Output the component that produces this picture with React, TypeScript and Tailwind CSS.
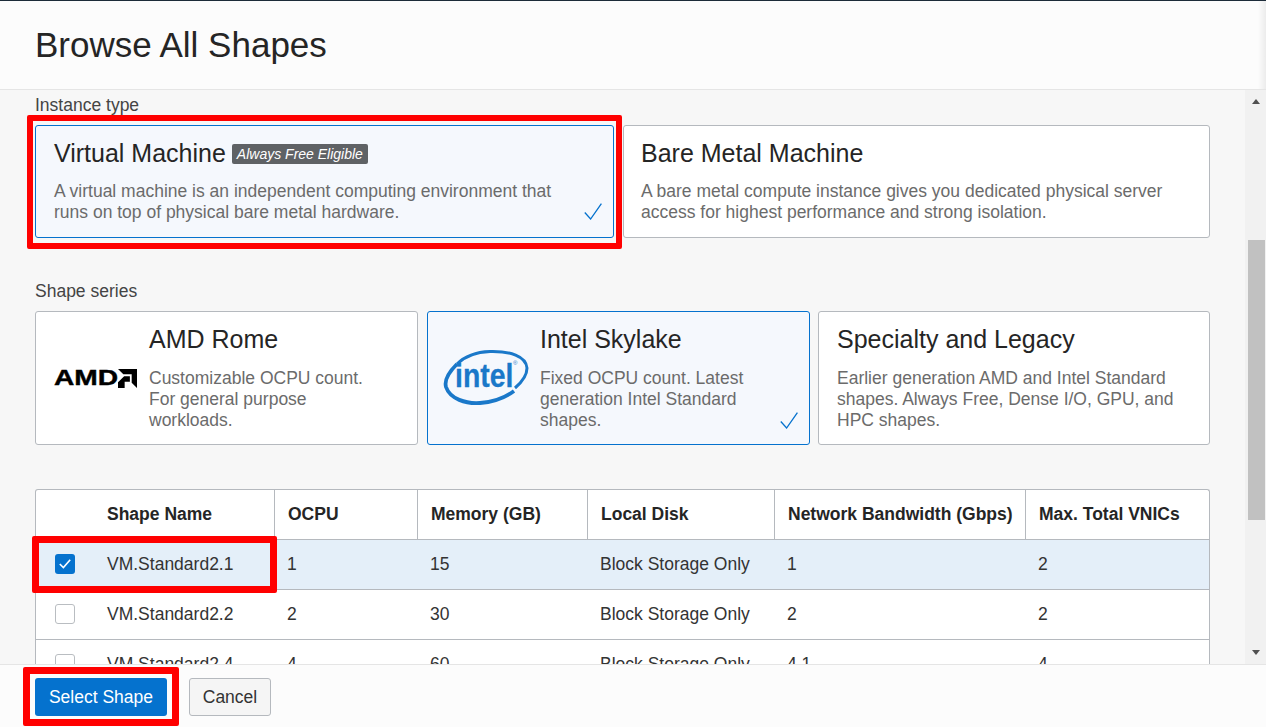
const font = "font-['Liberation_Sans',Arial,sans-serif]";

const Check = ({ className }: { className: string }) => (
  <svg viewBox="0 0 18 17" className={className} fill="none" stroke="#0572ce" strokeWidth="1.3">
    <path d="M0.8 9.5 L6.6 16 L17.4 0.6" />
  </svg>
);

const AmdLogo = () => (
  <div className="flex h-[19px] w-[83px] shrink-0 items-center">
    <span className="origin-left [transform:scaleX(1.28)] text-[22px] leading-none font-bold text-black [-webkit-text-stroke:0.4px_black]">
      AMD
    </span>
    <svg viewBox="0 0 20 20" className="ml-auto h-[19px] w-[19px]" fill="#000">
      <path d="M0 0 H20 V20 L14.4 14.4 V5.6 H5.6 Z" />
      <path d="M6.5 7.5 H12.5 V13.5 H7 V20 H0 V14 Z" />
    </svg>
  </div>
);

const IntelLogo = () => (
  <div className="relative mt-[33px] h-[64px] w-[92px] shrink-0 self-start">
    <svg viewBox="0 0 92 64" className="absolute inset-0 h-full w-full" fill="none" stroke="#1a78c9">
      <path d="M17 19 C9 27 4 35 6 42 C10 54 26 59 40 58 C54 57 66 52 74 46" strokeWidth="3.8" />
      <path d="M17 19 C25 11 36 7 50 6.5 C70 6 86 11 87 23 C87 30 82 37 75 43" strokeWidth="3" />
    </svg>
    <span className="absolute top-[13px] left-[15px] origin-left [transform:scaleX(0.86)] text-[33px] leading-[36px] font-bold text-[#1a78c9] [-webkit-text-stroke:0.3px_#1a78c9]">
      intel
    </span>
    <span className="absolute top-[15px] left-[73px] text-[6px] leading-[7px] text-[#1a78c9]">®</span>
  </div>
);

const TypeCard = ({
  title,
  badge,
  lines,
  selected,
  className,
}: {
  title: string;
  badge?: string;
  lines: string[];
  selected?: boolean;
  className: string;
}) => (
  <div
    className={`relative h-[113px] rounded-[3px] border pt-[11px] ${className} ${
      selected ? "border-[#0572ce] bg-[#f5f8fd]" : "border-[#b5b9be] bg-white"
    }`}
  >
    <div className="flex h-[33px] items-center gap-[6px]">
      <span className="text-[25px] leading-[33px] text-[#252525]">{title}</span>
      {badge && (
        <span className="rounded-[2px] bg-[#5f6265] px-[5px] text-[14px] leading-[20px] text-white italic">
          {badge}
        </span>
      )}
    </div>
    <div className="mt-[11px] text-[17.5px] leading-[21px] text-[#6b6b6b]">
      {lines.map((l) => (
        <div key={l}>{l}</div>
      ))}
    </div>
    {selected && <Check className="absolute top-[77px] right-[11px] h-[17px] w-[18px]" />}
  </div>
);

const SeriesCard = ({
  title,
  lines,
  logo,
  selected,
  className,
  pad,
}: {
  title: string;
  lines: string[];
  logo?: React.ReactNode;
  selected?: boolean;
  className: string;
  pad: string;
}) => (
  <div
    className={`relative flex h-[134px] items-center rounded-[3px] border ${pad} ${className} ${
      selected ? "border-[#0572ce] bg-[#f5f8fd]" : "border-[#b5b9be] bg-white"
    }`}
  >
    {logo}
    <div className="self-start pt-[11px]">
      <div className="text-[25px] leading-[33px] text-[#252525]">{title}</div>
      <div className="mt-[12px] text-[17.5px] leading-[21px] text-[#6b6b6b]">
        {lines.map((l) => (
          <div key={l}>{l}</div>
        ))}
      </div>
    </div>
    {selected && <Check className="absolute right-[11px] bottom-[15px] h-[17px] w-[18px]" />}
  </div>
);

const columns = [
  "w-[239px]",
  "w-[143px]",
  "w-[170px]",
  "w-[187px]",
  "w-[251px]",
  "w-[183px]",
];

const headers = ["Shape Name", "OCPU", "Memory (GB)", "Local Disk", "Network Bandwidth (Gbps)", "Max. Total VNICs"];

const rows = [
  ["VM.Standard2.1", "1", "15", "Block Storage Only", "1", "2"],
  ["VM.Standard2.2", "2", "30", "Block Storage Only", "2", "2"],
  ["VM.Standard2.4", "4", "60", "Block Storage Only", "4.1", "4"],
];

const ShapeTable = () => (
  <div className="mt-[44px] w-[1175px] rounded-t-[3px] border-x border-t border-[#b5b9be] bg-white">
    <div className="flex h-[50px] border-b border-[#b5b9be] text-[17.5px] font-bold text-[#252525]">
      {headers.map((h, i) => (
        <div
          key={h}
          className={`flex items-center ${columns[i]} ${i === 0 ? "pl-[71px]" : "pl-[13px]"} ${
            i < 5 ? "border-r border-[#b5b9be]" : ""
          }`}
        >
          {h}
        </div>
      ))}
    </div>
    {rows.map((row, r) => (
      <div
        key={row[0]}
        className={`flex h-[50px] border-b border-[#b5b9be] text-[17.5px] text-[#333] ${r === 0 ? "bg-[#e4eff9]" : ""}`}
      >
        {row.map((c, i) => (
          <div
            key={i}
            className={`relative flex items-center ${columns[i]} ${i === 0 ? "pl-[71px]" : "pl-[12px]"} ${
              i < 5 ? "pr-px" : ""
            }`}
          >
            {i === 0 &&
              (r === 0 ? (
                <span className="absolute top-[14px] left-[19px] flex h-[20px] w-[20px] items-center justify-center rounded-[3px] bg-[#0572ce]">
                  <svg viewBox="0 0 12 10" className="h-[10px] w-[12px]" fill="none" stroke="#fff" strokeWidth="1.6">
                    <path d="M0.8 5 L4.4 8.6 L11.2 0.8" />
                  </svg>
                </span>
              ) : (
                <span className="absolute top-[14px] left-[19px] h-[20px] w-[20px] rounded-[3px] border border-[#b9bdc1] bg-white" />
              ))}
            {c}
          </div>
        ))}
      </div>
    ))}
  </div>
);

const Scrollbar = () => (
  <div className="flex w-[21px] shrink-0 flex-col items-center bg-[#f1f1f1]">
    <div className="mt-[9px] h-0 w-0 border-x-[4.5px] border-b-[5px] border-x-transparent border-b-[#505050]" />
    <div className="mt-[136px] ml-px h-[280px] w-[17px] bg-[#c1c1c1]" />
    <div className="mt-[130px] h-0 w-0 border-x-[4.5px] border-t-[5px] border-x-transparent border-t-[#505050]" />
  </div>
);

const App = () => {
  return (
    <div className={`relative flex h-[727px] w-[1266px] flex-col overflow-hidden bg-[#fcfcfc] ${font}`}>
      <div className="h-px shrink-0 bg-[#1c2b39]" />
      <div className="relative flex h-[89px] shrink-0 items-center border-b border-[#e5e5e5] pl-[35px]">
        <h1 className="text-[35px] leading-[44px] font-normal text-[#252525]">Browse All Shapes</h1>
        <div className="absolute top-0 right-0 h-full w-[8px] bg-gradient-to-r from-transparent to-[#ececec]" />
      </div>
      <div className="flex min-h-0 flex-1 bg-[#f7f7f7]">
        <div className="min-w-0 flex-1 overflow-hidden pl-[35px]">
          <div className="pt-[5px] text-[17.5px] leading-[20px] text-[#444]">Instance type</div>
          <div className="mt-[10px] flex gap-[9px]">
            <TypeCard
              selected
              className="w-[579px] pl-[18px]"
              title="Virtual Machine"
              badge="Always Free Eligible"
              lines={[
                "A virtual machine is an independent computing environment that",
                "runs on top of physical bare metal hardware.",
              ]}
            />
            <TypeCard
              className="w-[587px] pl-[17px]"
              title="Bare Metal Machine"
              lines={[
                "A bare metal compute instance gives you dedicated physical server",
                "access for highest performance and strong isolation.",
              ]}
            />
          </div>
          <div className="mt-[43px] text-[17.5px] leading-[20px] text-[#444]">Shape series</div>
          <div className="mt-[10px] flex">
            <SeriesCard
              className="w-[383px]"
              pad="pl-[18px] gap-[12px]"
              logo={<AmdLogo />}
              title="AMD Rome"
              lines={["Customizable OCPU count.", "For general purpose", "workloads."]}
            />
            <SeriesCard
              selected
              className="ml-[9px] w-[383px]"
              pad="pl-[12px] gap-[8px]"
              logo={<IntelLogo />}
              title="Intel Skylake"
              lines={["Fixed OCPU count. Latest", "generation Intel Standard", "shapes."]}
            />
            <SeriesCard
              className="ml-[8px] w-[392px]"
              pad="pl-[18px]"
              title="Specialty and Legacy"
              lines={[
                "Earlier generation AMD and Intel Standard",
                "shapes. Always Free, Dense I/O, GPU, and",
                "HPC shapes.",
              ]}
            />
          </div>
          <ShapeTable />
        </div>
        <Scrollbar />
      </div>
      <div className="flex h-[63px] shrink-0 items-center gap-[22px] border-t border-[#e5e5e5] pt-[2px] pl-[35px] text-[17.5px]">
        <button className="h-[38px] w-[132px] rounded-[3px] bg-[#0572ce] text-white">Select Shape</button>
        <button className="h-[38px] w-[82px] rounded-[3px] border border-[#b5b9be] bg-[#f5f5f5] text-[#333]">
          Cancel
        </button>
      </div>

      {/* red highlights drawn over the screenshot */}
      <div className="pointer-events-none absolute top-[115px] left-[27px] h-[134px] w-[595px] rounded-[2px] border-[6px] border-[#ff0000]" />
      <div className="pointer-events-none absolute top-[536px] left-[32px] h-[57px] w-[245px] rounded-[2px] border-[7px] border-[#ff0000]" />
      <div className="pointer-events-none absolute top-[667px] left-[23px] h-[59px] w-[156px] rounded-[2px] border-[7px] border-[#ff0000]" />
    </div>
  );
};

export default App;
